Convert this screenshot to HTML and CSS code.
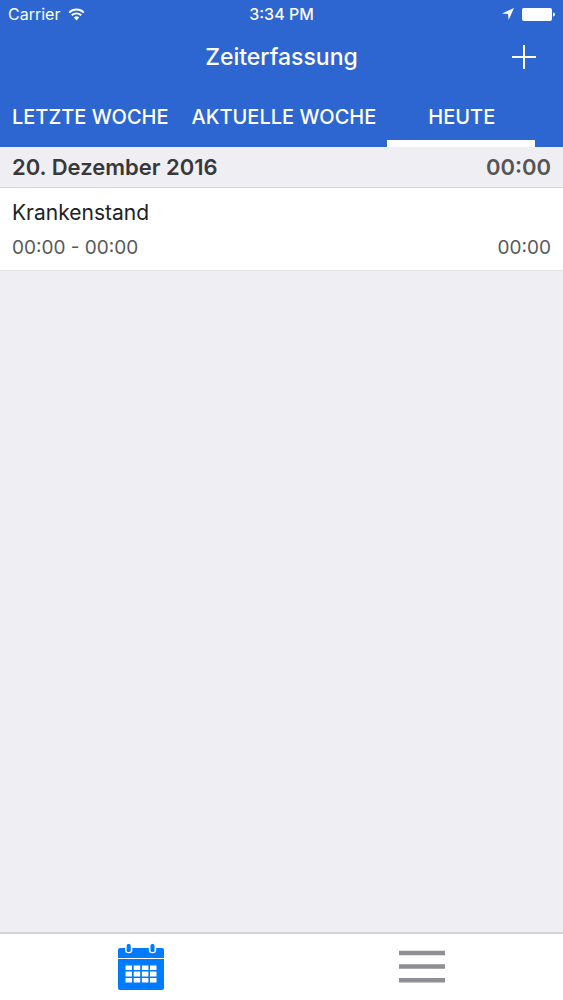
FILE: index.html
```html
<!DOCTYPE html>
<html lang="de">
<head>
<meta charset="utf-8">
<meta name="viewport" content="width=device-width, initial-scale=1">
<title>Zeiterfassung</title>
<link rel="stylesheet" href="styles.css">
</head>
<body>
<div class="app">
  <header class="header">
    <div class="status">
      <div class="status-left">
        <span>Carrier</span>
        <svg class="wifi" viewBox="0 0 17 13" aria-hidden="true">
          <path d="M1.2 4.6a10.3 10.3 0 0 1 14.6 0M3.8 7.3a6.7 6.7 0 0 1 9.4 0" fill="none" stroke="currentColor" stroke-width="1.9"/>
          <path d="M5.8 9.6a3.9 3.9 0 0 1 5.4 0L8.5 12.4z" fill="currentColor"/>
        </svg>
      </div>
      <time class="clock">3:34 PM</time>
      <div class="status-right">
        <svg class="location" viewBox="0 0 12 12" aria-hidden="true"><path d="M12 0 6.600 12 6 6 0 5.400z" fill="currentColor"/></svg>
        <svg class="battery" viewBox="0 0 33 13" aria-hidden="true"><rect width="30" height="13" rx="2" fill="currentColor"/><path d="M31 4.500c1.300.2 2 1 2 2s-.7 1.800-2 2z" fill="currentColor"/></svg>
      </div>
    </div>
    <div class="titlebar">
      <h1 class="title">Zeiterfassung</h1>
      <button class="add" type="button" aria-label="Eintrag hinzufügen">
        <svg viewBox="0 0 24 24" aria-hidden="true"><path d="M12 0v24M0 12h24" fill="none" stroke="currentColor" stroke-width="2"/></svg>
      </button>
    </div>
    <nav class="tabs" aria-label="Zeitraum">
      <button class="tab" type="button">LETZTE WOCHE</button>
      <button class="tab" type="button">AKTUELLE WOCHE</button>
      <button class="tab tab-active" type="button" aria-current="true">HEUTE</button>
    </nav>
  </header>
  <main class="content">
    <h2 class="day"><span>20. Dezember 2016</span><span class="day-total">00:00</span></h2>
    <article class="entry">
      <h3 class="entry-name">Krankenstand</h3>
      <div class="entry-times"><span>00:00 - 00:00</span><span>00:00</span></div>
    </article>
  </main>
  <nav class="tabbar" aria-label="Hauptnavigation">
    <button class="tabbar-item tabbar-active" type="button" aria-label="Kalender">
      <svg class="tabbar-icon" viewBox="0 0 46 46" aria-hidden="true">
        <path d="M2 4h5v2a3.700 3.200 0 0 0 7.400 0V4h16.400v2a3.700 3.200 0 0 0 7.400 0V4H44q2 0 2 2v8H0V6q0-2 2-2zM0 15h46v29q0 2-2 2H2q-2 0-2-2z" fill="currentColor"/>
        <rect x="8.700" y="0" width="4" height="8" rx="1.500" fill="currentColor"/>
        <rect x="32.500" y="0" width="4" height="8" rx="1.500" fill="currentColor"/>
        <path d="M7.500 21.500h6.500v4.500H7.500zM15.700 21.500h6.500v4.500h-6.500zM23.900 21.500h6.500v4.500h-6.500zM32 21.500h6.500v4.500h-6.500zM7.500 27.500h6.500v5H7.500zM15.700 27.500h6.500v5h-6.500zM23.900 27.500h6.500v5h-6.500zM32 27.500h6.500v5h-6.500zM7.500 34h6.500v4.500H7.500zM15.700 34h6.500v4.500h-6.500zM23.900 34h6.500v4.500h-6.500zM32 34h6.500v4.500h-6.500z" fill="#fff"/>
      </svg>
    </button>
    <button class="tabbar-item" type="button" aria-label="Menü">
      <svg class="tabbar-icon" viewBox="0 0 46 46" aria-hidden="true"><path d="M0 9h46M0 22.500h46M0 36.300h46" fill="none" stroke="currentColor" stroke-width="4.500"/></svg>
    </button>
  </nav>
</div>
</body>
</html>
```
FILE: styles.css
```css
* {
  box-sizing: border-box;
}

body {
  margin: 0;
  background: #efeff3;
  color: #222224;
  font-family: Inter, "Liberation Sans", sans-serif;
}

button {
  padding: 0;
  border: 0;
  background: none;
  color: inherit;
  font: inherit;
}

svg {
  display: block;
}

h1,
h2,
h3 {
  margin: 0;
}

.app {
  display: flex;
  flex-direction: column;
  min-height: 100vh;
}

.header {
  background: #2d66d0;
  color: #fff;
}

.status {
  display: grid;
  grid-template-columns: 1fr auto 1fr;
  align-items: center;
  height: 28px;
  padding: 0 8px;
  font-size: 16px;
}

.status-left,
.status-right {
  display: flex;
  align-items: center;
  gap: 8px;
}

.status-right {
  justify-content: flex-end;
}

.clock {
  font-weight: 500;
}

.wifi {
  width: 17px;
  height: 13px;
}

.location {
  width: 12px;
  height: 12px;
}

.battery {
  width: 33px;
  height: 13px;
}

.titlebar {
  display: grid;
  grid-template-columns: 1fr auto 1fr;
  align-items: center;
  height: 58px;
  padding: 0 27px;
}

.title {
  grid-column: 2;
  font-size: 23px;
  font-weight: 500;
}

.add {
  justify-self: end;
}

.add svg {
  width: 24px;
  height: 24px;
}

.tabs {
  display: flex;
  height: 61px;
}

.tab {
  padding: 8px 11px 0 12px;
  border-bottom: 7px solid transparent;
  font-size: 20px;
  font-weight: 500;
  white-space: nowrap;
}

.tab-active {
  min-width: 148px;
  border-bottom-color: #fff;
}

.content {
  flex: 1;
}

.day {
  display: flex;
  justify-content: space-between;
  align-items: center;
  height: 41px;
  padding: 0 12px;
  border-bottom: 1px solid #d8d8dc;
  color: #38383a;
  font-size: 22px;
  font-weight: 600;
}

.day-total {
  color: #555558;
}

.entry {
  display: flex;
  flex-direction: column;
  gap: 8px;
  padding: 11px 12px 9px;
  border-bottom: 1px solid #e4e4e8;
  background: #fff;
}

.entry-name {
  font-size: 21px;
  font-weight: 400;
  line-height: 28px;
}

.entry-times {
  display: flex;
  justify-content: space-between;
  color: #58585c;
  font-size: 19px;
  line-height: 26px;
}

.tabbar {
  display: grid;
  grid-template-columns: 1fr 1fr;
  height: 68px;
  border-top: 2px solid #d4d4d8;
  background: #fff;
  color: #8e8e93;
}

.tabbar-item {
  display: flex;
  justify-content: center;
  align-items: center;
}

.tabbar-active {
  color: #007aff;
}

.tabbar-icon {
  width: 46px;
  height: 46px;
}
```
